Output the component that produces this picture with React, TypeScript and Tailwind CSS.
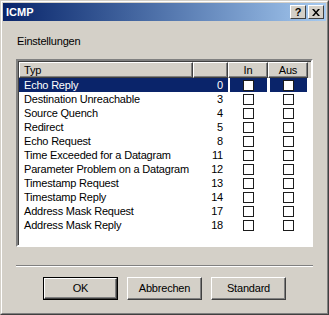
import React from "react";

const rows: [string, number][] = [
  ["Echo Reply", 0],
  ["Destination Unreachable", 3],
  ["Source Quench", 4],
  ["Redirect", 5],
  ["Echo Request", 8],
  ["Time Exceeded for a Datagram", 11],
  ["Parameter Problem on a Datagram", 12],
  ["Timestamp Request", 13],
  ["Timestamp Reply", 14],
  ["Address Mask Request", 17],
  ["Address Mask Reply", 18],
];

const font = { fontFamily: "'Liberation Sans', Arial, sans-serif" };

const HeaderCell = ({ w, children, right }: { w: string; children?: React.ReactNode; right?: boolean }) => (
  <div
    className={`${w} h-full shrink-0 border border-t-white border-l-white border-r-[#404040] border-b-[#404040] shadow-[inset_-1px_-1px_0_#808080] flex items-center ${
      right ? "justify-center" : "pl-[4px]"
    }`}
  >
    {children}
  </div>
);

const Check = () => <div className="w-[11px] h-[11px] bg-white border border-[#1c1c1c]" />;

const Button = ({ label, def }: { label: string; def?: boolean }) => (
  <div className={`w-[75px] h-[23px] ${def ? "border border-black" : ""} bg-[#d4d0c8]`}>
    <div className="w-full h-full border border-t-white border-l-white border-r-[#404040] border-b-[#404040] shadow-[inset_-1px_-1px_0_#808080] flex items-center justify-center text-[11px] text-black">
      {label}
    </div>
  </div>
);

export default function App() {
  return (
    <div
      className="w-[329px] h-[315px] bg-[#d4d0c8] border border-t-[#d4d0c8] border-l-[#d4d0c8] border-r-[#404040] border-b-[#404040] tracking-[-0.2px]"
      style={font}
    >
      <div className="h-full border border-t-white border-l-white border-r-[#808080] border-b-[#808080] p-px flex flex-col">
        {/* TITLE BAR */}
        <div className="h-[18px] shrink-0 bg-gradient-to-r from-[#0a246a] to-[#a6caf0] flex items-center justify-between pl-[3px] pr-[2px]">
          <span className="text-white font-bold text-[11px] leading-none tracking-normal">ICMP</span>
          <div className="flex gap-[2px]">
            <div className="w-[16px] h-[14px] bg-[#d4d0c8] border border-t-white border-l-white border-r-[#404040] border-b-[#404040] flex items-center justify-center text-[11px] font-bold leading-none">
              ?
            </div>
            <div className="w-[16px] h-[14px] bg-[#d4d0c8] border border-t-white border-l-white border-r-[#404040] border-b-[#404040] flex items-center justify-center">
              <svg width="8" height="7" viewBox="0 0 8 7">
                <path d="M0 0h2l2 2.5L6 0h2L5 3.5 8 7H6L4 4.5 2 7H0l3-3.5z" fill="#000" />
              </svg>
            </div>
          </div>
        </div>

        {/* CONTENT */}
        <div className="flex flex-col px-[13px] text-[11px] text-black">
          <p className="mt-[14px] leading-[13px] pl-px">Einstellungen</p>

          {/* LIST */}
          <div className="mt-[11px] h-[188px] border-2 border-t-[#808080] border-l-[#808080] border-r-white border-b-white">
            <div className="h-full shadow-[inset_1px_1px_0_#404040] bg-white pl-px pt-px">
              <div className="h-[16px] flex bg-[#d4d0c8] leading-none">
                <HeaderCell w="w-[174px]">Typ</HeaderCell>
                <HeaderCell w="w-[35px]" />
                <HeaderCell w="w-[40px]" right>
                  In
                </HeaderCell>
                <HeaderCell w="w-[40px]" right>
                  Aus
                </HeaderCell>
              </div>
              {rows.map(([name, n], i) => {
                const sel = i === 0;
                return (
                  <div key={name} className="h-[14px] flex leading-[14px]">
                    <div className={`w-[209px] flex ${sel ? "bg-[#0a246a] text-white" : ""}`}>
                      <span className="w-[174px] pl-[5px] whitespace-nowrap">{name}</span>
                      <span className="w-[35px] text-right pr-[5px]">{n}</span>
                    </div>
                    <div className="w-[40px] flex">
                      <div className={`w-[37px] h-full ml-[2px] flex justify-center items-center ${sel ? "bg-[#0a246a]" : ""}`}>
                        <Check />
                      </div>
                    </div>
                    <div className="w-[40px] flex">
                      <div className={`w-[37px] h-full ml-[2px] flex justify-center items-center ${sel ? "bg-[#0a246a]" : ""}`}>
                        <Check />
                      </div>
                    </div>
                  </div>
                );
              })}
            </div>
          </div>

          {/* SEPARATOR */}
          <div className="mt-[18px] h-[2px] border-t border-t-[#808080] border-b border-b-white" />

          {/* BUTTONS */}
          <div className="mt-[10px] flex gap-[9px] ml-[27px]">
            <Button label="OK" def />
            <Button label="Abbrechen" />
            <Button label="Standard" />
          </div>
        </div>
      </div>
    </div>
  );
}
